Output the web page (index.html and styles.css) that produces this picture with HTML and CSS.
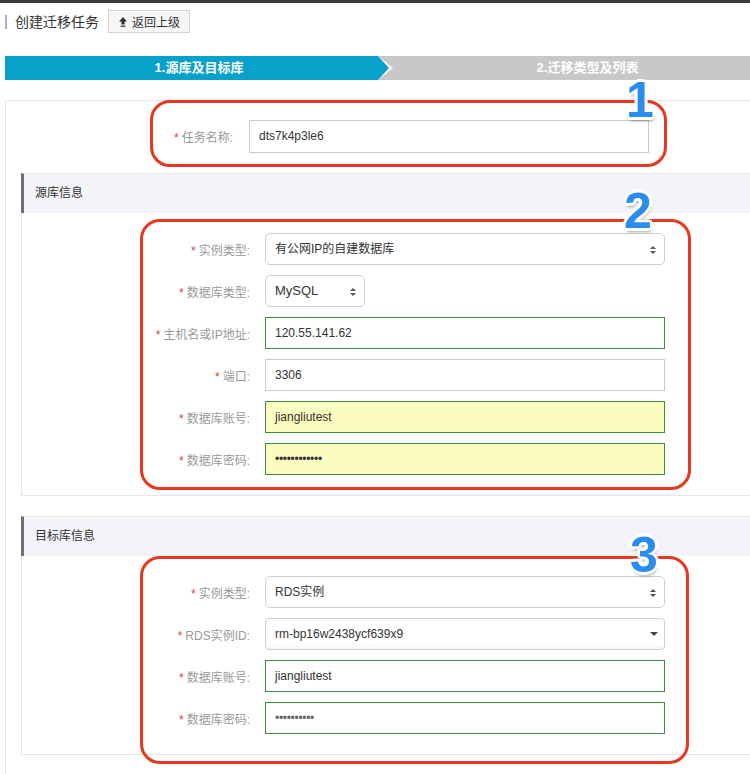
FILE: index.html
```
<!DOCTYPE html>
<html lang="zh-CN">
<head>
    <meta charset="UTF-8">
    <meta name="viewport" content="width=device-width, initial-scale=1.0">
    <title>创建迁移任务</title>
    <link rel="stylesheet" href="styles.css">
</head>
<body>
    <div class="topline"></div>
    <div class="page">
        <div class="head">
            <span class="title">创建迁移任务</span>
            <button class="back">
                <svg width="8" height="10" viewBox="0 0 8 10"><path d="M4 0L8 4.5H5.6V7.5H2.4V4.5H0Z" fill="#333"/><rect x="1.5" y="8.6" width="5" height="1.2" fill="#333"/></svg>
                返回上级
            </button>
        </div>

        <div class="steps">
            <div class="step on">1.源库及目标库</div>
            <div class="step">2.迁移类型及列表</div>
        </div>

        <div class="panel">
            <div class="row">
                <label class="lbl"><i>*</i>任务名称:</label>
                <div class="ctl">dts7k4p3le6</div>
            </div>

            <div class="section">
                <div class="sec-head">源库信息</div>
                <div class="sec-body">
                    <div class="row">
                        <label class="lbl"><i>*</i>实例类型:</label>
                        <div class="ctl sel">有公网IP的自建数据库<span class="updown"></span></div>
                    </div>
                    <div class="row">
                        <label class="lbl"><i>*</i>数据库类型:</label>
                        <div class="ctl sel short">MySQL<span class="updown"></span></div>
                    </div>
                    <div class="row">
                        <label class="lbl"><i>*</i>主机名或IP地址:</label>
                        <div class="ctl ok">120.55.141.62</div>
                    </div>
                    <div class="row">
                        <label class="lbl"><i>*</i>端口:</label>
                        <div class="ctl">3306</div>
                    </div>
                    <div class="row">
                        <label class="lbl"><i>*</i>数据库账号:</label>
                        <div class="ctl ok fill">jiangliutest</div>
                    </div>
                    <div class="row">
                        <label class="lbl"><i>*</i>数据库密码:</label>
                        <div class="ctl ok fill dots">••••••••••••</div>
                    </div>
                </div>
            </div>

            <div class="section">
                <div class="sec-head">目标库信息</div>
                <div class="sec-body">
                    <div class="row">
                        <label class="lbl"><i>*</i>实例类型:</label>
                        <div class="ctl sel">RDS实例<span class="updown"></span></div>
                    </div>
                    <div class="row">
                        <label class="lbl"><i>*</i>RDS实例ID:</label>
                        <div class="ctl drop">rm-bp16w2438ycf639x9<span class="caret"></span></div>
                    </div>
                    <div class="row">
                        <label class="lbl"><i>*</i>数据库账号:</label>
                        <div class="ctl ok">jiangliutest</div>
                    </div>
                    <div class="row">
                        <label class="lbl"><i>*</i>数据库密码:</label>
                        <div class="ctl ok dots grey">••••••••••</div>
                    </div>
                </div>
            </div>
        </div>

        <!-- 标注框和序号 -->
        <div class="ring r1"></div>
        <div class="ring r2"></div>
        <div class="ring r3"></div>
        <span class="num n1">1</span>
        <span class="num n2">2</span>
        <span class="num n3">3</span>
    </div>
</body>
</html>
```

FILE: styles.css
```
* { margin: 0; padding: 0; box-sizing: border-box; }
html, body { overflow: hidden; }
body {
    width: 750px;
    font-family: "Liberation Sans", "Noto Sans CJK SC", sans-serif;
    font-size: 12px;
    color: #333;
    background: #fff;
}
.topline {
    height: 3px;
    background-color: #3a3a3a;
}
.page {
    position: relative;
    width: 750px;
    padding-left: 5px;
}

/* 标题栏 */
.head {
    display: flex;
    align-items: center;
    padding-top: 7px;
}
.title {
    border-left: 2px solid #9fb4c8;
    padding-left: 8px;
    font-size: 14px;
    line-height: 14px;
    margin-right: 9px;
}
.back {
    display: flex;
    align-items: center;
    gap: 5px;
    width: 82px;
    height: 23px;
    padding-left: 10px;
    border: 1px solid #d2d2d2;
    background-color: #f6f6f6;
    font-family: inherit;
    font-size: 12px;
    color: #333;
}

/* 步骤条 */
.steps {
    display: flex;
    margin-top: 23px;
    height: 24px;
}
.step {
    height: 24px;
    line-height: 24px;
    color: #fff;
    font-weight: bold;
    font-size: 13px;
    text-align: center;
    background-color: #c8c8c8;
    flex: 1;
    padding-left: 47px;
}
.step.on {
    flex: 0 0 373px;
    padding-left: 15px;
    background-color: #07a1c9;
    position: relative;
}
.step.on::before,
.step.on::after {
    content: "";
    position: absolute;
    top: 0;
    border-top: 12px solid transparent;
    border-bottom: 12px solid transparent;
}
.step.on::before {
    right: -15px;
    border-left: 15px solid #fff;
}
.step.on::after {
    right: -11px;
    border-left: 11px solid #07a1c9;
}

/* 表单面板，右侧延伸出可视区 */
.panel {
    margin-top: 20px;
    border: 1px solid #e6e6e6;
    border-right: none;
    padding: 19px 0 20px 15px;
}
.row {
    display: flex;
    align-items: center;
}
.row + .row { margin-top: 10px; }
.lbl {
    width: 212px;
    margin-right: 16px;
    text-align: right;
    color: #999;
    font-size: 12px;
}
.lbl i {
    font-style: normal;
    color: #e4393c;
    margin-right: 3px;
}
.ctl {
    position: relative;
    width: 400px;
    height: 33px;
    line-height: 31px;
    padding-left: 9px;
    border: 1px solid #cbcbcb;
    background-color: #fff;
    color: #333;
    font-size: 12px;
}
.section .ctl { height: 32px; line-height: 30px; }
.ctl.ok { border-color: #3a8c3a; }
.ctl.fill { background-color: #fafcc0; }
.ctl.dots { letter-spacing: -0.3px; }
.ctl.grey { color: #666; }
.ctl.sel {
    border-color: #cfcfcf;
    border-radius: 5px;
}
.ctl.short { width: 100px; font-size: 13px; }
.ctl.drop {
    border-color: #cfcfcf;
    border-radius: 4px;
    background: linear-gradient(#fff 80%, #f7f7f7);
}
.updown {
    position: absolute;
    right: 8px;
    top: 12px;
    width: 0;
    height: 0;
    border-left: 3px solid transparent;
    border-right: 3px solid transparent;
    border-bottom: 3px solid #555;
}
.updown::after {
    content: "";
    position: absolute;
    left: -3px;
    top: 5px;
    border-left: 3px solid transparent;
    border-right: 3px solid transparent;
    border-top: 3px solid #555;
}
.caret {
    position: absolute;
    right: 6px;
    top: 13px;
    border-left: 4px solid transparent;
    border-right: 4px solid transparent;
    border-top: 4px solid #444;
}

/* 源库 / 目标库 分组 */
.section { margin-top: 20px; }
.section .lbl { width: 228px; margin-right: 15px; }
.sec-head {
    height: 40px;
    line-height: 39px;
    border-top: 1px solid #e3e6eb;
    border-left: 3px solid #6c6e7c;
    padding-left: 11px;
    background-color: #f3f4f7;
    font-size: 12px;
    color: #333;
}
.sec-body {
    border-left: 1px solid #e6e6e6;
    border-bottom: 1px solid #e6e6e6;
    padding: 20px 0;
}

/* 红色标注 */
.ring {
    position: absolute;
    border: 3px solid #e8361f;
    border-radius: 20px;
}
.r1 { left: 150px; top: 97px; width: 517px; height: 67px; }
.r2 { left: 140px; top: 216px; width: 551px; height: 271px; }
.r3 { left: 140px; top: 553px; width: 549px; height: 208px; }
.num {
    position: absolute;
    font-family: "Liberation Sans", sans-serif;
    font-weight: bold;
    font-size: 50px;
    line-height: 50px;
    color: #2a8cef;
    text-shadow:
        2px 0 #fff, -2px 0 #fff, 0 2px #fff, 0 -2px #fff,
        2px 2px #fff, -2px -2px #fff, 2px -2px #fff, -2px 2px #fff,
        3px 0 #fff, -3px 0 #fff, 0 3px #fff, 0 -3px #fff,
        1px 4px 3px rgba(0, 0, 0, 0.35);
}
.n1 { left: 626px; top: 72px; }
.n2 { left: 624px; top: 183px; }
.n3 { left: 630px; top: 527px; }
```
